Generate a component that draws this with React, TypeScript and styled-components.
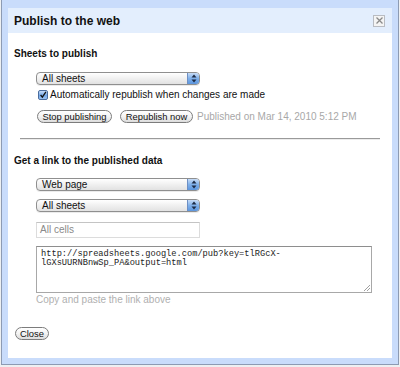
import React from 'react';
import styled, { createGlobalStyle } from 'styled-components';

const GlobalStyle = createGlobalStyle`
  html, body {
    margin: 0;
    padding: 0;
    background: #eef0f2;
    overflow: hidden;
  }
  #root {
    width: 400px;
    height: 367px;
  }
`;

const StepperIcon: React.FC = () => (
  <svg width="6" height="9" viewBox="0 0 6 9">
    <path d="M3 0.5 L5.5 3.5 L0.5 3.5 Z" fill="#1c2a44" />
    <path d="M3 8.5 L5.5 5.5 L0.5 5.5 Z" fill="#1c2a44" />
  </svg>
);

const Select: React.FC<{ label: string }> = ({ label }) => (
  <SelectBox>
    <SelectText>{label}</SelectText>
    <Stepper>
      <StepperIcon />
    </Stepper>
  </SelectBox>
);

const App: React.FC = () => {
  return (
    <>
      <GlobalStyle />
      <Frame>
        <Dialog>
          <TitleBar>
            <Title>Publish to the web</Title>
            <CloseBox>
              <svg width="7" height="7" viewBox="0 0 7 7">
                <path d="M0.5 0.5 L6.5 6.5 M6.5 0.5 L0.5 6.5" stroke="#8a8a8a" strokeWidth="1.3" />
              </svg>
            </CloseBox>
          </TitleBar>
          <Body>
            <SectionTitle>Sheets to publish</SectionTitle>
            <Indent $top={11}>
              <Select label="All sheets" />
            </Indent>
            <CheckRow>
              <CheckBox>
                <svg width="10" height="10" viewBox="0 0 10 10">
                  <path d="M2 5 L4.2 7.6 L8.6 1.2" stroke="#111" strokeWidth="1.6" fill="none" />
                </svg>
              </CheckBox>
              <CheckLabel>Automatically republish when changes are made</CheckLabel>
            </CheckRow>
            <ButtonRow>
              <PillButton $width={75}>Stop publishing</PillButton>
              <PillButton $width={73}>Republish now</PillButton>
              <Published>Published on Mar 14, 2010 5:12 PM</Published>
            </ButtonRow>
            <Divider />
            <SectionTitle $top={14}>Get a link to the published data</SectionTitle>
            <Indent $top={10}>
              <Select label="Web page" />
            </Indent>
            <Indent $top={8}>
              <Select label="All sheets" />
            </Indent>
            <Indent $top={10}>
              <CellsInput>All cells</CellsInput>
            </Indent>
            <Indent $top={8}>
              <LinkArea>
                {'http://spreadsheets.google.com/pub?key=tlRGcX-\nlGXsUURNBnwSp_PA&output=html'}
                <Grip>
                  <svg width="7" height="7" viewBox="0 0 7 7">
                    <path d="M1 7 L7 1 M4 7 L7 4" stroke="#888" strokeWidth="0.8" />
                  </svg>
                </Grip>
              </LinkArea>
            </Indent>
            <Indent $top={1}>
              <Hint>Copy and paste the link above</Hint>
            </Indent>
            <CloseRow>
              <PillButton $width={34}>Close</PillButton>
            </CloseRow>
          </Body>
        </Dialog>
      </Frame>
    </>
  );
};

export default App;

const Frame = styled.div`
  box-sizing: border-box;
  margin: -1px 0 0 1px;
  width: 398px;
  height: 366px;
  border: 1px solid #8d9bb3;
  background: #c9dcfb;
  padding: 8px 6px 6px 6px;
`;

const Dialog = styled.div`
  width: 384px;
  height: 350px;
  background: #ffffff;
  display: flex;
  flex-direction: column;
  font-family: 'Liberation Sans', Arial, sans-serif;
  color: #111;
`;

const TitleBar = styled.div`
  height: 25px;
  background: #e3eefd;
  display: flex;
  align-items: center;
  justify-content: space-between;
  padding: 0 7px 0 6px;
`;

const Title = styled.div`
  font-size: 12px;
  font-weight: 700;
  color: #111;
`;

const CloseBox = styled.div`
  box-sizing: border-box;
  width: 12px;
  height: 12px;
  border: 1px solid #b9bcc2;
  background: #f4f4f4;
  display: flex;
  align-items: center;
  justify-content: center;
`;

const Body = styled.div`
  display: flex;
  flex-direction: column;
  padding: 14px 12px 0 6px;
`;

const SectionTitle = styled.div<{ $top?: number }>`
  font-size: 10px;
  font-weight: 700;
  line-height: 14px;
  height: 14px;
  margin-top: ${({ $top }) => $top ?? 0}px;
`;

const Indent = styled.div<{ $top: number }>`
  margin-top: ${({ $top }) => $top}px;
  padding-left: 22px;
  display: flex;
`;

const SelectBox = styled.div`
  box-sizing: border-box;
  width: 164px;
  height: 13px;
  border: 1px solid #8f8f8f;
  border-radius: 4px;
  background: linear-gradient(#ffffff, #f0f0f0 50%, #e2e2e2);
  display: flex;
  align-items: center;
  overflow: hidden;
  box-shadow: 0 1px 0 rgba(0, 0, 0, 0.08);
`;

const SelectText = styled.div`
  flex: 1;
  font-size: 10px;
  line-height: 11px;
  padding-left: 5px;
  color: #111;
`;

const Stepper = styled.div`
  width: 11px;
  height: 100%;
  background: linear-gradient(#c8dcf6, #7fb0ea 50%, #5c96de);
  border-left: 1px solid #6d8fc4;
  display: flex;
  align-items: center;
  justify-content: center;
`;

const CheckRow = styled.div`
  margin-top: 4px;
  padding-left: 24px;
  display: flex;
  align-items: center;
  gap: 2px;
  height: 12px;
`;

const CheckBox = styled.div`
  box-sizing: border-box;
  width: 10px;
  height: 10px;
  border: 1px solid #4a6c9e;
  border-radius: 2px;
  background: linear-gradient(#c6dcf8, #74a8e8 55%, #9cc3f2);
  display: flex;
  align-items: center;
  justify-content: center;
`;

const CheckLabel = styled.div`
  font-size: 10px;
  line-height: 12px;
  color: #111;
`;

const ButtonRow = styled.div`
  margin-top: 9px;
  padding-left: 23px;
  display: flex;
  align-items: center;
  gap: 8px;
  height: 13px;
`;

const PillButton = styled.div<{ $width: number }>`
  box-sizing: border-box;
  width: ${({ $width }) => $width}px;
  height: 13px;
  border: 1px solid #7c7c7c;
  border-radius: 7px;
  background: linear-gradient(#ffffff, #f3f3f3 50%, #dcdcdc);
  font-size: 9.4px;
  line-height: 10px;
  color: #111;
  display: flex;
  align-items: center;
  justify-content: center;
  white-space: nowrap;
`;

const Published = styled.div`
  margin-left: -4px;
  font-size: 10px;
  color: #a8a8a8;
  white-space: nowrap;
`;

const Divider = styled.div`
  margin: 15px 0 0 6px;
  width: 360px;
  height: 1px;
  background: #9a9a9a;
  border-bottom: 1px solid #ececec;
`;

const CellsInput = styled.div`
  box-sizing: border-box;
  width: 164px;
  height: 16px;
  border: 1px solid #dcdcdc;
  border-top-color: #c4c4c4;
  font-size: 10px;
  line-height: 14px;
  color: #8a8a8a;
  padding-left: 3px;
`;

const LinkArea = styled.div`
  position: relative;
  box-sizing: border-box;
  width: 336px;
  height: 47px;
  border: 1px solid #a8a8a8;
  border-top-color: #8e8e8e;
  padding: 3px 4px;
  font-family: 'Liberation Mono', 'Courier New', monospace;
  font-size: 8.7px;
  line-height: 9px;
  color: #222;
  white-space: pre;
`;

const Grip = styled.div`
  position: absolute;
  right: 1px;
  bottom: 1px;
  display: flex;
`;

const Hint = styled.div`
  font-size: 10px;
  line-height: 12px;
  color: #b0b0b0;
`;

const CloseRow = styled.div`
  margin-top: 21px;
  padding-left: 1px;
  display: flex;
`;
